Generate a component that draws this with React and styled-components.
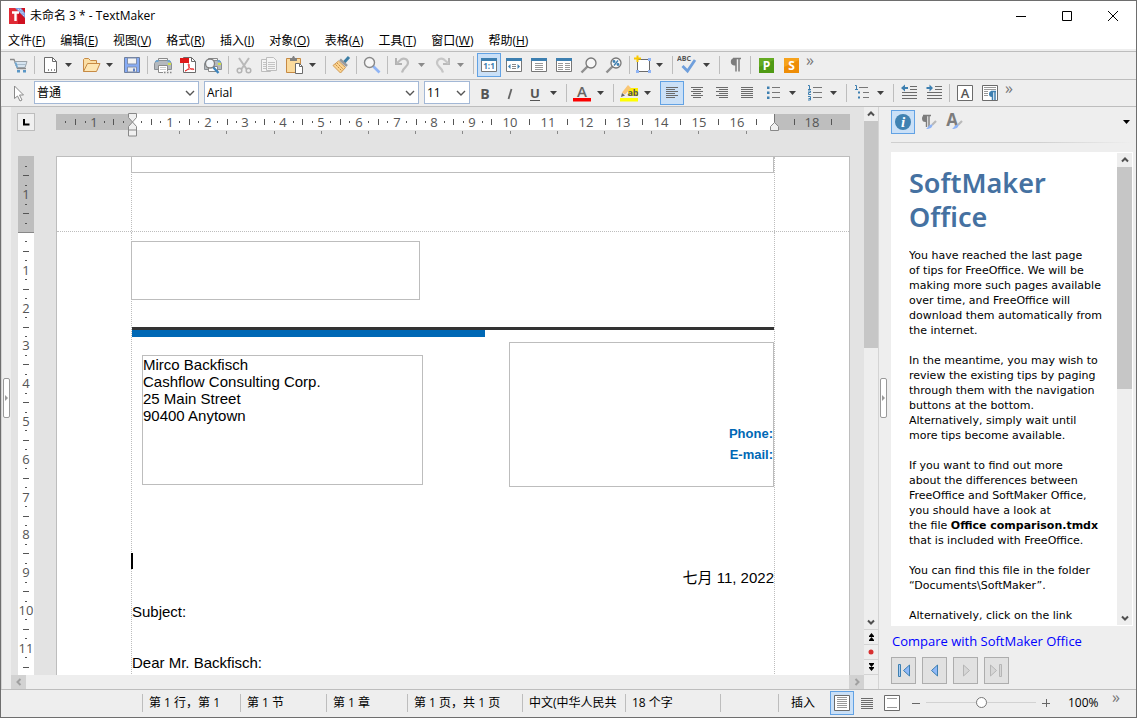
import React from "react";
import styled, { createGlobalStyle } from "styled-components";

const UI = `"Open Sans", "Noto Sans CJK SC", sans-serif`;
const LINE = "#bdbdbd";
const CHROME = "#eeeeee";
const INK = "#6b6b6b";
const BLUE = "#3d7fb0";

const Global = createGlobalStyle`
  * { box-sizing: border-box; }
  body { margin: 0; background: #fff; font-family: ${UI}; font-size: 12px; color: #000; }
  button, select, input { font: inherit; color: inherit; }
  svg { display: block; flex: none; }
`;

/* ---------- window frame ---------- */

const Window = styled.div`
  display: flex;
  flex-direction: column;
  height: 100vh;
  border: 1px solid #6e6e6e;
  background: ${CHROME};
  overflow: hidden;
`;

const TitleBar = styled.header`
  display: flex;
  align-items: center;
  flex: none;
  height: 29px;
  padding-left: 8px;
  gap: 5px;
  background: #fff;
`;

const Title = styled.h1`
  flex: 1;
  margin: 0;
  font-size: 12px;
  font-weight: 400;
  line-height: 20px;
`;

const CaptionButton = styled.button`
  display: grid;
  place-items: center;
  width: 46px;
  height: 29px;
  margin: 0 0 0 -5px;
  padding: 0;
  border: 0;
  background: transparent;
`;

const MenuBar = styled.nav`
  display: flex;
  align-items: center;
  flex: none;
  height: 21px;
  padding: 2px 0 0 7px;
  gap: 15px;
  background: #fff;
  border-bottom: 2px solid ${CHROME};
`;

const MenuItem = styled.button`
  padding: 0;
  border: 0;
  background: transparent;
  line-height: 18px;
  white-space: nowrap;
`;

/* ---------- toolbars ---------- */

const Toolbar = styled.div`
  display: flex;
  align-items: flex-start;
  flex: none;
  height: ${(p) => p.$h}px;
  padding: 1px 0 0 6px;
  border-top: 1px solid ${LINE};
`;

const Group = styled.div`
  display: flex;
  gap: ${(p) => p.$gap ?? 1}px;
  margin-right: ${(p) => p.$after || 0}px;
`;

const Split = styled.div`
  display: flex;
`;

const ToolButton = styled.button`
  display: grid;
  place-items: center;
  place-content: center;
  width: ${(p) => p.$w || 24}px;
  height: 24px;
  padding: 0;
  border: 1px solid ${(p) => (p.$on ? "#62a2e4" : "transparent")};
  background: ${(p) => (p.$on ? "#cae0f7" : "transparent")};
`;

const CaretButton = styled.button`
  display: flex;
  align-items: center;
  width: 16px;
  height: 24px;
  padding: 0 0 0 3px;
  border: 0;
  background: transparent;
  color: ${(p) => (p.$dim ? "#8a8a8a" : "#404040")};
`;

const Separator = styled.span`
  flex: none;
  width: 1px;
  height: 18px;
  margin: 3px 3px 0;
  background: ${LINE};
`;

const MoreButton = styled.button`
  align-self: flex-start;
  width: 14px;
  padding: 0;
  border: 0;
  background: transparent;
  color: #777;
  font-size: 16px;
  line-height: 14px;
`;

const Combo = styled.select`
  appearance: none;
  width: ${(p) => p.$w}px;
  height: 23px;
  margin-right: ${(p) => p.$after}px;
  padding: 0 18px 1px 2px;
  border: 1px solid #a3b8d6;
  border-radius: 0;
  background: #fff
    url("data:image/svg+xml,%3Csvg xmlns='http://www.w3.org/2000/svg' width='10' height='6'%3E%3Cpath d='M1 1l4 4 4-4' fill='none' stroke='%23555' stroke-width='1.4'/%3E%3C/svg%3E")
    no-repeat right 3px center;
`;

/* ---------- main area ---------- */

const Main = styled.main`
  display: flex;
  flex: 1;
  min-height: 0;
  border-top: 1px solid ${LINE};
`;

const Gutter = styled.div`
  display: flex;
  align-items: center;
  flex: none;
  width: ${(p) => p.$w}px;
  padding-left: 1px;
  border-left: 1px solid #d4d4d4;
  background: ${CHROME};
`;

const Handle = styled.button`
  display: grid;
  place-items: center;
  width: 7px;
  height: 40px;
  margin-left: ${(p) => p.$gap || 0}px;
  padding: 0;
  border: 1px solid #999;
  border-radius: 2px;
  background: #fff;
`;

const Editor = styled.section`
  display: flex;
  flex-direction: column;
  flex: 1;
  min-width: 0;
  background: #e3e3e3;
`;

const RulerRow = styled.div`
  display: flex;
  align-items: flex-start;
  flex: none;
  height: 49px;
  padding: 6px 0 0 6px;
  gap: 21px;
`;

const TabKind = styled.button`
  display: grid;
  place-items: center;
  flex: none;
  width: 18px;
  height: 18px;
  padding: 0;
  border: 1px solid ${LINE};
  background: #f0f0f0;
`;

const RulerSlot = styled.div`
  padding-top: 1px;
  svg { overflow: visible; }
`;

const Viewport = styled.div`
  display: flex;
  align-items: flex-start;
  flex: 1;
  min-height: 0;
  padding-left: 7px;
  gap: 22px;
  overflow: hidden;
`;

const Paper = styled.article`
  flex: none;
  width: 794px;
  min-height: 1100px;
  border: 1px solid ${LINE};
  background: #fff;
  font-family: "Liberation Sans", "Noto Sans CJK SC", sans-serif;
  font-size: 15px;
  line-height: 17px;
`;

const HeaderZone = styled.div`
  height: 75px;
  padding: 0 74px;
  border-bottom: 1px dotted ${LINE};
`;

const Column = styled.div`
  min-height: ${(p) => p.$h}px;
  padding-top: ${(p) => p.$top || 0}px;
  border: dotted ${LINE};
  border-width: 0 1px;
`;

const HeaderFrame = styled.div`
  height: 16px;
  margin: 0 0 0 -1px;
  border: solid ${LINE};
  border-width: 0 1px 1px;
`;

const BodyZone = styled.div`
  padding: 0 74px;
`;

const LogoFrame = styled.div`
  width: 289px;
  height: 59px;
  margin: 0 0 27px -1px;
  border: 1px solid ${LINE};
`;

const Flag = styled.div`
  border-top: 3px solid #333;
  &::after {
    content: "";
    display: block;
    width: 55%;
    height: 7px;
    background: #0068b5;
  }
`;

const FrameRow = styled.div`
  display: flex;
  justify-content: space-between;
  align-items: flex-start;
  margin-top: 5px;
  padding-left: 10px;
`;

const AddressFrame = styled.address`
  width: 281px;
  height: 130px;
  margin-top: 13px;
  border: 1px solid ${LINE};
  font-style: normal;
`;

const ContactFrame = styled.div`
  width: 265px;
  height: 145px;
  padding-top: 80px;
  border: 1px solid ${LINE};
  color: #0068b5;
  font-size: 13px;
  font-weight: 700;
  line-height: 21px;
  text-align: right;
`;

const CaretLine = styled.div`
  width: 2px;
  height: 16px;
  margin: 66px 0 0 -1px;
  background: #000;
`;

const Para = styled.p`
  margin: ${(p) => p.$top || 0}px 0 0;
  text-align: ${(p) => (p.$right ? "right" : "left")};
`;

/* ---------- scroll bars ---------- */

const HScroll = styled.div`
  display: flex;
  justify-content: space-between;
  flex: none;
  height: 14px;
  background: ${CHROME};
`;

const VScroll = styled.div`
  display: flex;
  flex-direction: column;
  flex: none;
  width: ${(p) => p.$w}px;
  background: ${CHROME};
`;

const ScrollButton = styled.button`
  display: grid;
  place-items: center;
  flex: none;
  width: ${(p) => (p.$flat ? "15px" : "100%")};
  height: 14px;
  padding: 0;
  border: 0;
  background: ${(p) => (p.$flat ? "#d2d2d2" : CHROME)};
  color: ${(p) => (p.$flat ? "#a0a0a0" : "#505050")};
`;

const Track = styled.div`
  flex: 1;
  min-height: 0;
`;

const Thumb = styled.div`
  height: ${(p) => p.$h}%;
  background: #c6c6c6;
`;

const JumpButton = styled(ScrollButton)`
  height: 15px;
  border-top: 1px solid #d4d4d4;
  color: #000;
`;

const ScrollFoot = styled.div`
  height: 15px;
  border-top: 1px solid #d4d4d4;
`;

/* ---------- side panel ---------- */

const SidePanel = styled.aside`
  display: flex;
  flex-direction: column;
  flex: none;
  width: 245px;
  padding: 3px 3px 5px 0;
`;

const PanelTabs = styled.div`
  display: flex;
  align-items: center;
  height: 24px;
  gap: 2px;
`;

const PanelMenu = styled.button`
  margin-left: auto;
  padding: 0 3px;
  border: 0;
  background: transparent;
`;

const Fade = styled.div`
  flex: none;
  height: 1px;
  margin: 8px 0 9px;
  background: linear-gradient(to right, #cfcfcf 60%, ${CHROME});
`;

const TipBox = styled.div`
  display: flex;
  flex: 1;
  min-height: 0;
  padding: 1px 1px 1px 18px;
  background: #fff;
`;

const Tip = styled.div`
  flex: 1;
  min-width: 0;
  overflow: hidden;
  white-space: nowrap;
  font-family: "DejaVu Sans", sans-serif;
  font-size: 11px;
  line-height: 15px;
  h2 {
    margin: 13px 0 14px;
    color: #4571a1;
    font-family: "Noto Sans", sans-serif;
    font-size: 27px;
    font-weight: 600;
    line-height: 34px;
  }
  p { margin: 0 0 15px; }
`;

const TipLink = styled.a`
  padding: 5px 1px 0;
  color: #0000ff;
  font-size: 13px;
  line-height: 20px;
  text-decoration: none;
`;

const NavRow = styled.div`
  display: flex;
  gap: 6px;
  margin-top: 6px;
`;

const NavButton = styled.button`
  display: grid;
  place-items: center;
  width: 25px;
  height: 27px;
  padding: 0;
  border: 1px solid #adadad;
  background: #e1e1e1;
`;

/* ---------- status bar ---------- */

const StatusBar = styled.footer`
  display: flex;
  align-items: center;
  flex: none;
  height: 28px;
  border-top: 1px solid ${LINE};
  padding: 0 13px 2px 141px;
`;

const Cell = styled.span`
  flex: none;
  width: ${(p) => p.$w}px;
  height: 18px;
  padding-left: ${(p) => p.$pad || 6}px;
  border-left: 1px solid ${LINE};
  line-height: 18px;
  white-space: nowrap;
`;

const Spacer = styled.span`
  flex: 1;
`;

const ZoomButton = styled.button`
  display: grid;
  place-items: center;
  width: 12px;
  padding: 0;
  border: 0;
  background: transparent;
`;

const Slider = styled.input`
  appearance: none;
  width: 110px;
  height: 16px;
  margin: 0 4px;
  background: linear-gradient(#d2d2d2, #d2d2d2) center / 100% 1px no-repeat;
  &::-webkit-slider-thumb {
    appearance: none;
    width: 11px;
    height: 11px;
    border: 1px solid #777;
    border-radius: 50%;
    background: #fff;
  }
`;

const ZoomValue = styled.output`
  width: 57px;
  padding-left: 16px;
  white-space: nowrap;
`;

/* ---------- drawings ---------- */

const Svg = ({ w = 22, h = 22, children }) => (
  <svg width={w} height={h} viewBox={`0 0 ${w} ${h}`} fill="none" aria-hidden="true">
    {children}
  </svg>
);

const Caret = () => (
  <Svg w={7} h={4}>
    <path d="M0 0h7L3.5 4z" fill="currentColor" />
  </Svg>
);

const Chevron = ({ d }) => (
  <Svg w={10} h={10}>
    <path
      d={{ up: "M2 6.5L5 3.5l3 3", down: "M2 3.5l3 3 3-3", left: "M6.5 2L3.5 5l3 3", right: "M3.5 2l3 3-3 3" }[d]}
      stroke="currentColor"
      strokeWidth="2"
    />
  </Svg>
);

const lines = (x1, x2, ys, stroke = INK) =>
  ys.map((y) => <path key={y} d={`M${x1} ${y + 0.5}H${x2}`} stroke={stroke} />);

const PageLens = ({ children, label }) => (
  <Svg>
    <path d="M3.5 4.5h15v13h-15z" fill="#fff" stroke="#777" />
    <path d="M3 4h16v3H3z" fill={BLUE} />
    {children}
    {label}
  </Svg>
);

const Lens = ({ children }) => (
  <Svg>
    <path d="M9.500 12.500l-6 6" stroke="#8f8f8f" strokeWidth="2.4" />
    <circle cx="13" cy="9" r="5" fill="#f7f7f7" stroke="#777" strokeWidth="1.3" />
    {children}
  </Svg>
);

const Glyph = ({ x, y, size, fill, weight = 700, family = "Open Sans", children }) => (
  <text x={x} y={y} fontSize={size} fill={fill} fontWeight={weight} fontFamily={family} textAnchor="middle">
    {children}
  </text>
);

const PrinterBody = () => (
  <>
    <path d="M6.5 4.5h9v4h-9z" fill="#f5f5f5" stroke="#8a8a8a" />
    <path d="M2.5 9.5l2-3h13l2 3v6h-17z" fill="#b4b9be" stroke="#8a8f94" />
    <path d="M3 7.500l1.500-1.500h2v2H3zM15.500 6h2L19 7.500v.5h-3.500z" fill="#6ea5cf" />
    <path d="M16 9h3v2h-3z" fill="#cfe04a" />
  </>
);

const icons = {
  cart: (
    <Svg>
      <path d="M2 5.5h4l3.500 9h8.500" stroke="#8a8a8a" strokeWidth="1.3" />
      <path d="M6.500 7.5h12.500l-2 6H9z" fill="#d6e4f0" stroke="#9aa2a8" />
      <path d="M7 10.500h11" stroke="#a9bccb" />
      <path d="M6.500 8.500h2l1.500 5H8.500z" fill="#6ea5cf" />
      <path d="M9 16h3v2.500H9zM15 16h3v2.500h-3z" fill="#5b97c6" />
    </Svg>
  ),
  doc: (
    <Svg>
      <path d="M5.5 3.5h8l4 4v11h-12z" fill="#fff" stroke={INK} />
      <path d="M13.5 3.5v4h4" stroke={INK} />
      <path d="M9 16h1M12 16h1M15 16h1" stroke={INK} strokeWidth="1.5" />
    </Svg>
  ),
  open: (
    <Svg>
      <path d="M3.5 17.5v-12l1-1h4l2 2h6v3" fill="#fbdfa5" stroke="#c68a45" />
      <path d="M3.5 17.5l4-8h12.5l-3.500 8z" fill="#fde6b3" stroke="#c68a45" />
    </Svg>
  ),
  save: (
    <Svg>
      <path d="M3.5 3.5h15v15h-15z" fill="#86abf5" stroke="#6f7f9c" />
      <path d="M6.5 4h9v6h-9z" fill="#f3f3f3" stroke="#7f8fae" />
      <path d="M6.5 13h9v5h-9z" fill="#ececec" stroke="#7f8fae" />
      <path d="M12 14.5h2v3h-2z" fill="#5d7fc4" />
    </Svg>
  ),
  print: (
    <Svg>
      <PrinterBody />
      <path d="M6.5 11.5h9v7h-9z" fill="#fff" stroke="#8a8a8a" />
      <path d="M8 13.5h6M8 15.5h6" stroke="#ccc" />
      <path d="M11 17h10v3H11z" fill={CHROME} />
      <path d="M12 18.5h1.500M15 18.5h1.500M18 18.5h1.500" stroke="#888" strokeWidth="1.500" />
    </Svg>
  ),
  pdf: (
    <Svg>
      <path d="M6.5 3.5h8l4 4v11h-12z" fill="#fff" stroke={INK} />
      <path d="M14.5 3.5v4h4" stroke={INK} />
      <path d="M3 4h9v5H3z" fill="#e01818" />
      <path d="M8 17c3-1 5-4 4-7-1-1-1 1 0 3s3 3 5 2.5c0-1.5-5-1-9 1.500z" stroke="#e33" />
    </Svg>
  ),
  preview: (
    <Svg>
      <PrinterBody />
      <path d="M6.5 12.5h9v5h-9z" fill="#fff" stroke="#8a8a8a" />
      <path d="M11 13l5.500 6" stroke="#3f86be" strokeWidth="2.4" />
      <circle cx="8" cy="9.5" r="4.500" fill="#f1f5f9" stroke="#808080" strokeWidth="1.3" />
    </Svg>
  ),
  cut: (
    <Svg>
      <path d="M6 4l7.500 11M16 4L8.500 15" stroke="#b9b9b9" strokeWidth="2" />
      <circle cx="6.500" cy="16.500" r="2.300" stroke="#b3b3b3" strokeWidth="1.500" />
      <circle cx="15.500" cy="16.500" r="2.300" stroke="#b3b3b3" strokeWidth="1.500" />
    </Svg>
  ),
  copy: (
    <Svg>
      <path d="M3.5 5.5h9v12h-9z" fill="#f4f4f4" stroke="#bdbdbd" />
      <path d="M8.5 3.5h7l3 3v10h-10z" fill="#f4f4f4" stroke="#bdbdbd" />
      {lines(10, 17, [8, 10, 12, 14], "#c4c4c4")}
      {lines(5, 8, [8, 10, 12, 14], "#c4c4c4")}
    </Svg>
  ),
  paste: (
    <Svg>
      <path d="M3.5 4.5h14v14h-14z" fill="#fbdb9d" stroke="#c68a45" />
      <path d="M7 7V4h2l1-2h1l1 2h2v3z" fill="#808080" />
      <path d="M12.5 9.5h4l3 3v7h-7z" fill="#fff" stroke={INK} />
      <path d="M16.5 9.5v3h3" stroke={INK} />
    </Svg>
  ),
  brush: (
    <Svg>
      <path d="M19 3l-5 5.500" stroke="#3d7fa6" strokeWidth="3" />
      <path d="M10 5.500l7 6.500" stroke="#9a9a9a" strokeWidth="2.600" />
      <path d="M8.500 7l7 6.500-5 5.500L3 11.500z" fill="#fbd491" stroke="#d09a55" />
      <path d="M5.500 10.500l6.500 6.500M7 9l6.500 6.500" stroke="#c68a45" strokeDasharray="2 1" />
    </Svg>
  ),
  find: (
    <Svg>
      <path d="M12 12l6.500 6.500" stroke="#8fb4f5" strokeWidth="2.600" />
      <circle cx="8.5" cy="8.5" r="5" fill="#f7f7f7" stroke="#888" strokeWidth="1.400" />
    </Svg>
  ),
  undo: (
    <Svg w={20}>
      <path d="M3 4v6h6" stroke="#b2b2b2" strokeWidth="2" />
      <path d="M3.500 9.500L8 5.500c3-2 7-.5 7 3.500 0 4-5 4-6 9.500" stroke="#bcbcbc" strokeWidth="2.200" />
    </Svg>
  ),
  redo: (
    <Svg w={20}>
      <path d="M16 4v6h-6" stroke="#b9b9b9" strokeWidth="2" />
      <path d="M15.500 9.500L11 5.500c-3-2-7-.5-7 3.500 0 4 5 4 6 9.500" stroke="#c6c6c6" strokeWidth="2.200" />
    </Svg>
  ),
  actual: <PageLens label={<Glyph x={11} y={15} size={8} fill={BLUE}>1:1</Glyph>} />,
  fitWidth: (
    <PageLens>
      <path d="M9 10.5h4M9 12.5h4M9 14.5h4" stroke="#888" />
      <path d="M7.500 10v5L5 12.5zM14.500 10v5l2.500-2.500z" fill={BLUE} />
    </PageLens>
  ),
  fitPage: <PageLens>{lines(7, 15, [9, 11, 13, 15], "#999")}</PageLens>,
  twoPages: (
    <PageLens>
      {lines(5, 10, [9, 11, 13, 15], "#999")}
      {lines(12, 17, [9, 11, 13, 15], "#999")}
    </PageLens>
  ),
  zoom: <Lens />,
  zoomPct: (
    <Lens>
      <path d="M11 11.500l4-5" stroke={BLUE} strokeWidth="1.300" />
      <circle cx="11" cy="7.500" r="1.400" fill={BLUE} />
      <circle cx="15" cy="10.500" r="1.400" fill={BLUE} />
    </Lens>
  ),
  frame: (
    <Svg w={20}>
      <path d="M4.5 5.5h12v12h-12z" fill="#fff" stroke={INK} />
      <path d="M15 4h3v3h-3zM3 16h3v3H3zM15 16h3v3h-3z" fill="#8fb4f5" />
      <path d="M4.5 1.500v6.500M1 4.500h7" stroke="#f9c800" strokeWidth="2" />
    </Svg>
  ),
  spell: (
    <Svg>
      <Glyph x={7} y={7} size={7} fill="#555">ABC</Glyph>
      <path d="M5.500 12l5 5 7.500-11" stroke="#6f9fdc" strokeWidth="2.800" />
    </Svg>
  ),
  pilcrow: (
    <Svg>
      <path d="M9 4.5h8M12 5v12.500M15 5v12.500" stroke="#7c7c7c" strokeWidth="1.500" />
      <path d="M12 4h-2a3.800 3.800 0 000 7.500h2z" fill="#7c7c7c" />
    </Svg>
  ),
  planmaker: (
    <Svg>
      <path d="M4 4h15v15H4z" fill="#64aa22" />
      <path d="M4 13L19 6v13H4z" fill="#4f9a14" />
      <Glyph x={11.5} y={16} size={12} fill="#fff">P</Glyph>
    </Svg>
  ),
  presentations: (
    <Svg>
      <path d="M4 4h15v15H4z" fill="#f6a21c" />
      <path d="M4 13L19 6v13H4z" fill="#ee8d06" />
      <Glyph x={11.5} y={16} size={12} fill="#fff">S</Glyph>
    </Svg>
  ),
  pointer: (
    <Svg>
      <path d="M6.500 4v12.500l3-2.500 2.500 5 2-1-2.500-5h4z" fill="#fff" stroke="#8a8a8a" />
    </Svg>
  ),
  bold: <Svg><Glyph x={11} y={17} size={14} fill="#555">B</Glyph></Svg>,
  italic: (
    <Svg>
      <path d="M12.500 7l-3 10" stroke="#666" strokeWidth="1.800" />
    </Svg>
  ),
  underline: (
    <Svg>
      <Glyph x={11} y={16} size={13} fill="#555" weight={700}>U</Glyph>
      <path d="M6 18.5h10" stroke="#555" />
    </Svg>
  ),
  fontColor: (
    <Svg>
      <Glyph x={11} y={15} size={15} fill="#666" weight={600}>A</Glyph>
      <path d="M2 16h18v3.500H2z" fill="#fb0000" />
    </Svg>
  ),
  highlight: (
    <Svg>
      <path d="M10 6h10v8H10z" fill="#ffee00" />
      <path d="M10 3l3 3-6 6.500-3-2z" fill="#f9c674" />
      <path d="M4 11l3 2.500L3 15z" fill="#666" />
      <Glyph x={15} y={14} size={9} fill="#555">ab</Glyph>
      <path d="M2 16h18v3.500H2z" fill="#ffff00" />
    </Svg>
  ),
  left: <Svg>{lines(5, 17, [5, 9, 13])}{lines(5, 14, [7, 11, 15])}</Svg>,
  center: <Svg>{lines(5, 17, [5, 9, 13])}{lines(7, 15, [7, 11, 15])}</Svg>,
  right: <Svg>{lines(5, 17, [5, 9, 13])}{lines(8, 17, [7, 11, 15])}</Svg>,
  justify: <Svg>{lines(5, 17, [5, 7, 9, 11, 13, 15])}</Svg>,
  bullets: (
    <Svg>
      {lines(9, 17, [5, 10, 15], "#777")}
      <path d="M4 4.500h2.500v2.500H4zM4 9.500h2.500v2.500H4zM4 14.500h2.500v2.500H4z" fill={BLUE} />
    </Svg>
  ),
  numbers: (
    <Svg>
      {lines(9, 18, [5, 10, 15], "#777")}
      <path
        d="M4 3.500h1.500v4M4 7.500h3M4 9h2.500v1.500H4.500V12.500H7M4 14.500h2.500v3.500H4M4.500 16.500h2"
        stroke={BLUE}
      />
    </Svg>
  ),
  outline: (
    <Svg>
      {lines(8, 17, [5], "#777")}
      {lines(12, 18, [10, 15], "#777")}
      <path d="M4 3.500h1.500v4M4 7.500h3" stroke={BLUE} />
      <path d="M7 9.500h2v2H7zM7 14.500h2v2H7z" fill={BLUE} />
    </Svg>
  ),
  outdent: (
    <Svg>
      {lines(12, 19, [4, 7])}
      {lines(4, 19, [10, 13, 16])}
      <path d="M3 6l4-3.500V5h3v2H7v2.500z" fill={BLUE} />
    </Svg>
  ),
  indent: (
    <Svg>
      {lines(12, 19, [4, 7])}
      {lines(4, 19, [10, 13, 16])}
      <path d="M10 6L6.500 2.500V5H3.500v2h3v2.500z" fill={BLUE} />
    </Svg>
  ),
  charBox: (
    <Svg>
      <path d="M3.5 3.5h15v15h-15z" fill="#fff" stroke={INK} />
      <Glyph x={11} y={16} size={13} fill="#555" weight={600}>A</Glyph>
    </Svg>
  ),
  paraBox: (
    <Svg>
      <path d="M3.5 3.5h15v15h-15z" fill="#fff" stroke={INK} />
      {lines(5, 17, [5, 7], "#999")}
      {lines(5, 9, [9, 11, 13], "#999")}
      <path d="M12 9.500h5M13.500 10v8M16 10v8" stroke={BLUE} strokeWidth="1.500" />
      <path d="M13 9a3 3 0 000 6z" fill={BLUE} />
    </Svg>
  ),
  info: (
    <Svg>
      <circle cx="11" cy="11" r="8" fill="#4082b2" />
      <Glyph x={11} y={16} size={15} fill="#fff" family="Liberation Serif"><tspan fontStyle="italic">i</tspan></Glyph>
    </Svg>
  ),
  paraStyle: (
    <Svg>
      <path d="M5 4.5h8M8.500 5v11M11 5v11" stroke="#7c7c7c" strokeWidth="1.400" />
      <path d="M8.500 4H7.500a3.500 3.500 0 000 7h1z" fill="#7c7c7c" />
      <path d="M18 10l-4 4" stroke="#b9b9b9" strokeWidth="2.200" />
      <path d="M14.500 13.500c0 3-2 4.500-6.500 4.500 2-1 2.500-5 6.500-4.500z" fill="#8fb4f5" />
    </Svg>
  ),
  charStyle: (
    <Svg>
      <Glyph x={8} y={15} size={17} fill="#7c7c7c">A</Glyph>
      <path d="M18 10l-4 4" stroke="#b9b9b9" strokeWidth="2.200" />
      <path d="M14.500 13.500c0 3-2 4.500-6.500 4.500 2-1 2.500-5 6.500-4.500z" fill="#8fb4f5" />
    </Svg>
  ),
  viewPage: (
    <Svg>
      <path d="M3.5 3.5h15v15h-15z" fill="#fff" stroke={INK} />
      {lines(6, 16, [5, 7, 9, 11, 13, 15], "#999")}
    </Svg>
  ),
  viewDraft: <Svg>{lines(5, 17, [6, 8, 10, 12, 14, 16])}</Svg>,
  viewMaster: (
    <Svg>
      <path d="M3.5 3.5h15v15h-15z" fill="#fff" stroke={INK} />
      {lines(6, 16, [6, 15], "#999")}
    </Svg>
  ),
};

const Tool = ({ icon, label, caret, on, w, dim }) => (
  <Split>
    <ToolButton $on={on} $w={w} title={label} aria-label={label} aria-pressed={on}>
      {icons[icon]}
    </ToolButton>
    {caret && (
      <CaretButton $dim={dim} aria-label={`${label} 选项`}>
        <Caret />
      </CaretButton>
    )}
  </Split>
);

/* ---------- rulers ---------- */

const CM = 37.8;
const range = (a, b) => Array.from({ length: b - a + 1 }, (_, i) => a + i);

function HorizontalRuler() {
  const zero = 76;
  const at = (cm) => Math.round(zero + cm * CM);
  return (
    <svg width="794" height="24" viewBox="0 0 794 24" fontFamily="Open Sans" fontSize="13" fill="#555">
      <path d="M0 0h794v16H0z" fill="#bebebe" />
      <path d="M76 0h642v16H76z" fill="#fff" />
      {range(-1, 18).map((n) =>
        n === 0 || n === 17 ? null : (
          <text key={n} x={at(n)} y="13" textAnchor="middle">
            {Math.abs(n)}
          </text>
        )
      )}
      {range(-2, 18).map((n) => (
        <path key={n} d={`M${at(n + 0.5)} 5h1v6h-1z`} />
      ))}
      {range(-2, 9).map((n) => (
        <React.Fragment key={n}>
          {n > -2 && <path d={`M${at(n + 0.25)} 7h1v2h-1z`} />}
          {n < 9 && <path d={`M${at(n + 0.75)} 7h1v2h-1z`} />}
        </React.Fragment>
      ))}
      <path d="M9 7h1v2h-1z" />
      {range(1, 13).map((n) => (
        <path key={n} d={`M${Math.round(zero + n * 47.2)} 17h1v3h-1z`} fill="#888" />
      ))}
      <path
        d="M72.5 -.5h8v4l-4 4.500 4 4.500v9.500h-8v-9.500l4-4.500-4-4.500zM72.5 16h8"
        fill="#f0f0f0"
        stroke="#888"
      />
      <path d="M718.5 0v9" stroke="#777" />
      <path d="M714.5 16.500v-4l4-4 4 4v4z" fill="#f0f0f0" stroke="#888" />
    </svg>
  );
}

function VerticalRuler() {
  const zero = 76;
  const at = (cm) => Math.round(zero + cm * CM);
  return (
    <svg width="16" height="1100" viewBox="0 0 16 1100" fontFamily="Open Sans" fontSize="13" fill="#555">
      <path d="M0 0h16v1100H0z" fill="#fff" />
      <path d="M0 0h16v76H0z" fill="#bebebe" />
      <path d="M0 76h16v1H0z" fill="#888" />
      {range(-2, 26).map((n) => (
        <React.Fragment key={n}>
          {n !== 0 && n > -2 && (
            <text x="8" y={at(n) + 5} textAnchor="middle">
              {Math.abs(n)}
            </text>
          )}
          <path d={`M7 ${at(n + 0.25)}h2v1h-2z`} />
          <path d={`M5 ${at(n + 0.5)}h6v1h-6z`} />
          <path d={`M7 ${at(n + 0.75)}h2v1h-2z`} />
        </React.Fragment>
      ))}
    </svg>
  );
}

/* ---------- page ---------- */

const menus = [
  ["文件", "F"], ["编辑", "E"], ["视图", "V"], ["格式", "R"], ["插入", "I"],
  ["对象", "O"], ["表格", "A"], ["工具", "T"], ["窗口", "W"], ["帮助", "H"],
];

const Letter = () => (
  <Paper>
    <HeaderZone>
      <Column $h={74}>
        <HeaderFrame />
      </Column>
    </HeaderZone>
    <BodyZone>
      <Column $h={1020} $top={9}>
        <LogoFrame />
        <Flag />
        <FrameRow>
          <AddressFrame>
            Mirco Backfisch<br />
            Cashflow Consulting Corp.<br />
            25 Main Street<br />
            90400 Anytown
          </AddressFrame>
          <ContactFrame>
            Phone:<br />
            E-mail:
          </ContactFrame>
        </FrameRow>
        <CaretLine />
        <Para $right>七月 11, 2022</Para>
        <Para $top={17}>Subject:</Para>
        <Para $top={34}>Dear Mr. Backfisch:</Para>
      </Column>
    </BodyZone>
  </Paper>
);

const Tips = () => (
  <Tip>
    <h2>SoftMaker<br />Office</h2>
    <p>
      You have reached the last page<br />
      of tips for FreeOffice. We will be<br />
      making more such pages available<br />
      over time, and FreeOffice will<br />
      download them automatically from<br />
      the internet.
    </p>
    <p>
      In the meantime, you may wish to<br />
      review the existing tips by paging<br />
      through them with the navigation<br />
      buttons at the bottom.<br />
      Alternatively, simply wait until<br />
      more tips become available.
    </p>
    <p>
      If you want to find out more<br />
      about the differences between<br />
      FreeOffice and SoftMaker Office,<br />
      you should have a look at<br />
      the file <b>Office comparison.tmdx</b><br />
      that is included with FreeOffice.
    </p>
    <p>
      You can find this file in the folder<br />
      “Documents\SoftMaker”.
    </p>
    <p>
      Alternatively, click on the link<br />
      below, which will
    </p>
  </Tip>
);

export default function App() {
  return (
    <>
      <Global />
      <Window>
        <TitleBar>
          <Svg w={16} h={16}>
            <path d="M0 0h16v16H0z" fill="#cf1020" />
            <path d="M0 0h9v16H0z" fill="#e02a35" />
            <path d="M6 0h6l4 5v5z" fill="#7f9fe0" />
            <path d="M9 1l6 7M11 1l4 5" stroke="#dfe8fb" strokeDasharray="1 1" />
            <path d="M3 4.5h7M6.5 5v8" stroke="#fff" strokeWidth="2.400" />
          </Svg>
          <Title>未命名 3 * - TextMaker</Title>
          <CaptionButton aria-label="最小化">
            <Svg w={10} h={10}><path d="M0 5.5h10" stroke="#000" /></Svg>
          </CaptionButton>
          <CaptionButton aria-label="最大化">
            <Svg w={10} h={10}><path d="M.5.5h9v9h-9z" stroke="#000" /></Svg>
          </CaptionButton>
          <CaptionButton aria-label="关闭">
            <Svg w={10} h={10}><path d="M0 0l10 10M10 0L0 10" stroke="#000" /></Svg>
          </CaptionButton>
        </TitleBar>

        <MenuBar>
          {menus.map(([name, key]) => (
            <MenuItem key={key}>
              {name}(<u>{key}</u>)
            </MenuItem>
          ))}
        </MenuBar>

        <Toolbar $h={28}>
          <Tool icon="cart" label="购物车" />
          <Separator />
          <Group>
            <Tool icon="doc" label="新建" caret />
            <Tool icon="open" label="打开" caret />
            <Tool icon="save" label="保存" />
          </Group>
          <Separator />
          <Group>
            <Tool icon="print" label="打印" />
            <Tool icon="pdf" label="导出 PDF" />
            <Tool icon="preview" label="打印预览" />
          </Group>
          <Separator />
          <Group>
            <Tool icon="cut" label="剪切" />
            <Tool icon="copy" label="复制" />
            <Tool icon="paste" label="粘贴" caret />
          </Group>
          <Separator />
          <Tool icon="brush" label="格式刷" />
          <Separator />
          <Tool icon="find" label="查找" />
          <Separator />
          <Group>
            <Tool icon="undo" label="撤消" caret dim />
            <Tool icon="redo" label="重做" caret dim w={22} />
          </Group>
          <Separator />
          <Group>
            <Tool icon="actual" label="实际大小" on />
            <Tool icon="fitWidth" label="适合宽度" />
            <Tool icon="fitPage" label="整页" />
            <Tool icon="twoPages" label="双页" />
            <Tool icon="zoom" label="缩放" />
            <Tool icon="zoomPct" label="缩放比例" />
          </Group>
          <Separator />
          <Tool icon="frame" label="插入框架" caret w={20} />
          <Separator />
          <Tool icon="spell" label="拼写检查" caret />
          <Separator />
          <Tool icon="pilcrow" label="显示标记" />
          <Separator />
          <Group>
            <Tool icon="planmaker" label="PlanMaker" />
            <Tool icon="presentations" label="Presentations" />
          </Group>
          <MoreButton aria-label="更多">»</MoreButton>
        </Toolbar>

        <Toolbar $h={27}>
          <Group $gap={3}>
            <Tool icon="pointer" label="对象模式" />
            <Combo $w={165} $after={2} aria-label="样式" defaultValue="普通">
              <option>普通</option>
            </Combo>
            <Combo $w={215} $after={2} aria-label="字体" defaultValue="Arial">
              <option>Arial</option>
            </Combo>
            <Combo $w={46} $after={0} aria-label="字号" defaultValue="11">
              <option>11</option>
            </Combo>
            <Group>
              <Tool icon="bold" label="粗体" />
              <Tool icon="italic" label="斜体" />
              <Tool icon="underline" label="下划线" caret />
            </Group>
          </Group>
          <Separator />
          <Tool icon="fontColor" label="字体颜色" caret />
          <Separator />
          <Group $gap={3}>
            <Tool icon="highlight" label="突出显示" caret />
            <Group>
              <Tool icon="left" label="左对齐" on />
              <Tool icon="center" label="居中" />
              <Tool icon="right" label="右对齐" />
              <Tool icon="justify" label="两端对齐" />
            </Group>
            <Group>
              <Tool icon="bullets" label="项目符号" caret />
              <Tool icon="numbers" label="编号" caret />
            </Group>
          </Group>
          <Separator />
          <Tool icon="outline" label="多级列表" caret />
          <Separator />
          <Group>
            <Tool icon="outdent" label="减少缩进" />
            <Tool icon="indent" label="增加缩进" />
          </Group>
          <Separator />
          <Group>
            <Tool icon="charBox" label="字符" />
            <Tool icon="paraBox" label="段落" />
          </Group>
          <MoreButton aria-label="更多">»</MoreButton>
        </Toolbar>

        <Main>
          <Gutter $w={10}>
            <Handle aria-label="展开左侧栏">
              <Svg w={3} h={6}><path d="M0 0l3 3-3 3z" fill="#999" /></Svg>
            </Handle>
          </Gutter>

          <Editor>
            <RulerRow>
              <TabKind aria-label="制表符类型">
                <Svg w={8} h={8}><path d="M2 1v5.500h5.500" stroke="#000" strokeWidth="2" /></Svg>
              </TabKind>
              <RulerSlot><HorizontalRuler /></RulerSlot>
            </RulerRow>
            <Viewport>
              <VerticalRuler />
              <Letter />
            </Viewport>
            <HScroll>
              <ScrollButton $flat aria-label="向左滚动"><Chevron d="left" /></ScrollButton>
              <ScrollButton $flat aria-label="向右滚动"><Chevron d="right" /></ScrollButton>
            </HScroll>
          </Editor>

          <VScroll $w={14}>
            <ScrollButton aria-label="向上滚动"><Chevron d="up" /></ScrollButton>
            <Track><Thumb $h={46} /></Track>
            <ScrollButton aria-label="向下滚动"><Chevron d="down" /></ScrollButton>
            <JumpButton aria-label="上一页">
              <Svg w={7} h={8}><path d="M3.5 0L6 3H1zM3.5 4L6 7H1zM1 7h5v1H1zM1 3h5v1H1z" fill="#000" /></Svg>
            </JumpButton>
            <JumpButton aria-label="选择对象">
              <Svg w={6} h={6}><circle cx="3" cy="3" r="2.500" fill="#d83030" /></Svg>
            </JumpButton>
            <JumpButton aria-label="下一页">
              <Svg w={7} h={8}><path d="M1 0h5v1H1zM1 1h5L3.5 4zM1 4h5v1H1zM1 5h5L3.5 8z" fill="#000" /></Svg>
            </JumpButton>
            <ScrollFoot />
          </VScroll>

          <Gutter $w={13}>
            <Handle aria-label="折叠侧边栏">
              <Svg w={3} h={6}><path d="M0 0l3 3-3 3z" fill="#999" /></Svg>
            </Handle>
          </Gutter>

          <SidePanel>
            <PanelTabs>
              <ToolButton $on aria-label="提示">{icons.info}</ToolButton>
              <ToolButton aria-label="段落样式">{icons.paraStyle}</ToolButton>
              <ToolButton aria-label="字符样式">{icons.charStyle}</ToolButton>
              <PanelMenu aria-label="面板菜单"><Caret /></PanelMenu>
            </PanelTabs>
            <Fade />
            <TipBox>
              <Tips />
              <VScroll $w={15}>
                <ScrollButton aria-label="向上滚动"><Chevron d="up" /></ScrollButton>
                <Track><Thumb $h={50} /></Track>
                <ScrollButton aria-label="向下滚动"><Chevron d="down" /></ScrollButton>
              </VScroll>
            </TipBox>
            <TipLink href="#compare">Compare with SoftMaker Office</TipLink>
            <NavRow>
              <NavButton aria-label="第一页">
                <Svg w={13} h={13}>
                  <path d="M1.5.5h2v12h-2z" fill="#a9cdf5" stroke={BLUE} />
                  <path d="M12.5 1v11L6.500 6.500z" fill="#8fb8f7" stroke={BLUE} />
                </Svg>
              </NavButton>
              <NavButton aria-label="上一页">
                <Svg w={13} h={13}><path d="M9.500 1v11L3.500 6.500z" fill="#8fb8f7" stroke={BLUE} /></Svg>
              </NavButton>
              <NavButton aria-label="下一页" disabled>
                <Svg w={13} h={13}><path d="M4.500 1v11l6-5.500z" fill="#d6d6d6" stroke="#b5b5b5" /></Svg>
              </NavButton>
              <NavButton aria-label="最后一页" disabled>
                <Svg w={13} h={13}>
                  <path d="M.5 1v11l6-5.500z" fill="#d6d6d6" stroke="#b5b5b5" />
                  <path d="M9.500.5h2v12h-2z" fill="#d6d6d6" stroke="#b5b5b5" />
                </Svg>
              </NavButton>
            </NavRow>
          </SidePanel>
        </Main>

        <StatusBar>
          <Cell $w={98}>第 1 行，第 1</Cell>
          <Cell $w={86}>第 1 节</Cell>
          <Cell $w={81}>第 1 章</Cell>
          <Cell $w={115}>第 1 页，共 1 页</Cell>
          <Cell $w={103}>中文(中华人民共</Cell>
          <Cell $w={95}>18 个字</Cell>
          <Cell $w={58} />
          <Cell $w={50} $pad={12}>插入</Cell>
          <Spacer />
          <Group $after={6}>
            <Tool icon="viewPage" label="页面视图" on />
            <Tool icon="viewDraft" label="连续视图" />
            <Tool icon="viewMaster" label="母版视图" />
          </Group>
          <Group $gap={0}>
            <ZoomButton aria-label="缩小"><Svg w={8} h={8}><path d="M0 4.500h8" stroke="#666" /></Svg></ZoomButton>
            <Slider type="range" min="0" max="100" defaultValue="50" aria-label="缩放" />
            <ZoomButton aria-label="放大"><Svg w={8} h={8}><path d="M0 4.500h8M4.500 0v8" stroke="#666" /></Svg></ZoomButton>
          </Group>
          <ZoomValue>100%</ZoomValue>
          <MoreButton aria-label="更多">»</MoreButton>
        </StatusBar>
      </Window>
    </>
  );
}
